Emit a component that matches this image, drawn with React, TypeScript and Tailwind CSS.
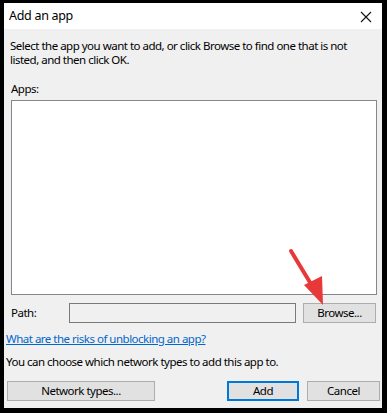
import React from "react";

const font = { fontFamily: '"Segoe UI", "Noto Sans", Arial, sans-serif' };

export default function App() {
  return (
    <div className="relative w-[387px] h-[413px] bg-black pt-[3px] pl-[4px] pr-[5px] pb-[5px]" style={font}>
      <div className="flex flex-col w-[378px] h-[405px] bg-[#f0f0f0] text-[11.5px] leading-[14px] tracking-[-0.5px] text-black whitespace-nowrap overflow-hidden">
        <div className="flex items-center justify-between h-[26px] shrink-0 bg-white pl-[5px] pr-[10px]">
          <span className="text-[12.5px] tracking-[-0.3px]">Add an app</span>
          <svg width="12" height="12" viewBox="0 0 12 12" className="mt-[1px]">
            <path d="M1 1 L11 11 M11 1 L1 11" stroke="#111" strokeWidth="1.1" fill="none" />
          </svg>
        </div>
        <div className="pl-[6px] pr-[6px] mt-[10px]">
          Select the app you want to add, or click Browse to find one that is not
          <br />
          listed, and then click OK.
        </div>
        <div className="pl-[7px] mt-[15px]">Apps:</div>
        <div className="ml-[7px] mt-[4px] w-[366px] h-[195px] shrink-0 bg-white border border-[#828790]" />
        <div className="flex items-center mt-[8px] ml-[7px]">
          <span className="w-[58px]">Path:</span>
          <div className="w-[227px] h-[20px] border border-[#7a7a7a] bg-[#f0f0f0]" />
          <div className="ml-[7px] w-[73px] h-[20px] border border-[#adadad] bg-[#e1e1e1] flex items-center justify-center">
            Browse...
          </div>
        </div>
        <div className="pl-[2px] mt-[9px]">
          <span className="text-[#0066cc] underline">What are the risks of unblocking an app?</span>
        </div>
        <div className="pl-[2px] mt-[9px]">You can choose which network types to add this app to.</div>
        <div className="flex mt-[12px] ml-[3px]">
          <div className="w-[148px] h-[20px] border border-[#adadad] bg-[#e1e1e1] flex items-center justify-center">
            Network types...
          </div>
          <div className="ml-[72px] w-[72px] h-[20px] border-2 border-[#0078d7] bg-[#e1e1e1] flex items-center justify-center">
            Add
          </div>
          <div className="ml-[8px] w-[73px] h-[20px] border border-[#adadad] bg-[#e1e1e1] flex items-center justify-center">
            Cancel
          </div>
        </div>
      </div>
      <svg className="absolute left-0 top-0 pointer-events-none" width="387" height="413" viewBox="0 0 387 413">
        <line x1="291" y1="251" x2="314" y2="289" stroke="#e8393a" strokeWidth="4" strokeLinecap="round" />
        <polygon points="304,285 322,276 323,305" fill="#e8393a" />
      </svg>
    </div>
  );
}
